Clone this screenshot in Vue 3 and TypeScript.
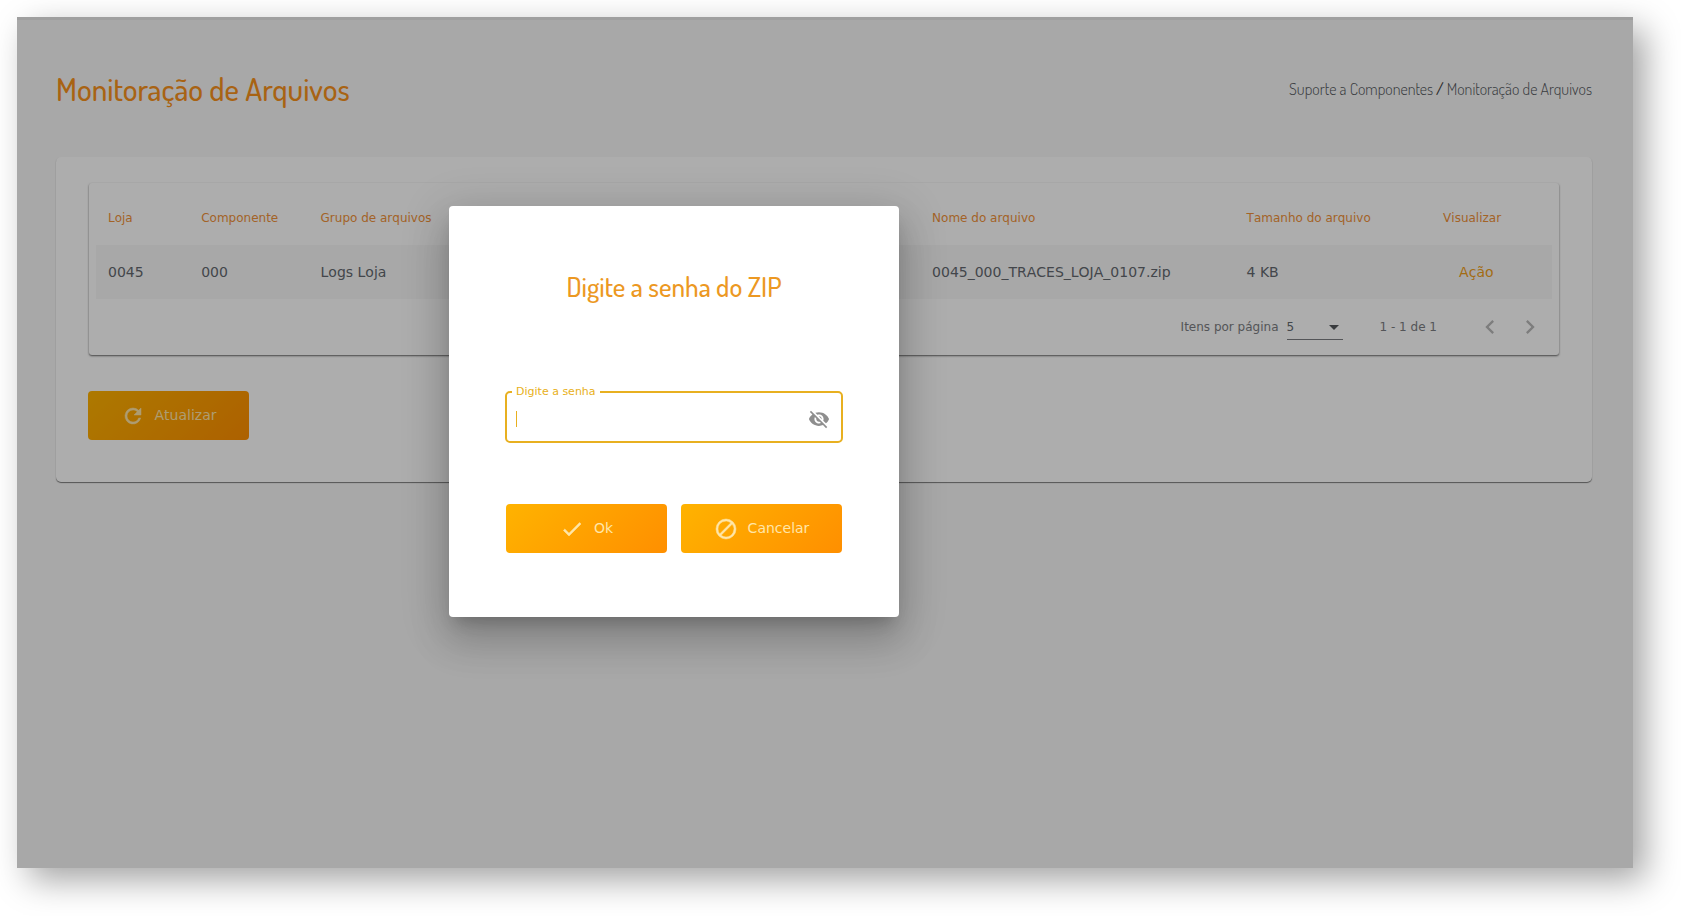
<script setup lang="ts">
import { ref } from 'vue'

interface FileRow {
  store: string
  component: string
  group: string
  name: string
  size: string
}

const columns: string[] = ['Loja', 'Componente', 'Grupo de arquivos', 'Nome do arquivo', 'Tamanho do arquivo', 'Visualizar']
const rows: FileRow[] = [
  { store: '0045', component: '000', group: 'Logs Loja', name: '0045_000_TRACES_LOJA_0107.zip', size: '4 KB' },
]
const pageSize = ref('5')
const password = ref('')
</script>

<template>
  <div class="canvas">
    <div class="frame">
      <main class="page">
        <header class="page-header">
          <h1>Monitoração de Arquivos</h1>
          <nav class="crumbs">
            <a href="#">Suporte a Componentes</a>
            <span class="slash">/</span>
            <a href="#">Monitoração de Arquivos</a>
          </nav>
        </header>

        <section class="card">
          <div class="table-card">
            <table>
              <colgroup>
                <col class="c-store" />
                <col class="c-comp" />
                <col class="c-group" />
                <col class="c-name" />
                <col class="c-size" />
                <col class="c-view" />
              </colgroup>
              <thead>
                <tr>
                  <th v-for="c in columns" :key="c">{{ c }}</th>
                </tr>
              </thead>
              <tbody>
                <tr v-for="r in rows" :key="r.name">
                  <td>{{ r.store }}</td>
                  <td>{{ r.component }}</td>
                  <td>{{ r.group }}</td>
                  <td>{{ r.name }}</td>
                  <td>{{ r.size }}</td>
                  <td><a class="action" href="#">Ação</a></td>
                </tr>
              </tbody>
            </table>
            <div class="paginator">
              <label for="page-size">Itens por página</label>
              <span class="select">
                <select id="page-size" v-model="pageSize">
                  <option>5</option>
                  <option>10</option>
                </select>
                <svg width="10" height="5" viewBox="0 0 10 5"><path d="M0 0h10L5 5z" /></svg>
              </span>
              <span class="range">1 - 1 de 1</span>
              <button class="arrow" type="button" aria-label="Página anterior">
                <svg width="28" height="28" viewBox="0 0 24 24"><path d="M15.41 7.41 14 6l-6 6 6 6 1.41-1.41L10.83 12z" /></svg>
              </button>
              <button class="arrow" type="button" aria-label="Próxima página">
                <svg width="28" height="28" viewBox="0 0 24 24"><path d="M10 6 8.59 7.41 13.17 12l-4.58 4.59L10 18l6-6z" /></svg>
              </button>
            </div>
          </div>
          <button class="btn" type="button">
            <svg width="24" height="24" viewBox="0 0 24 24"><path d="M17.65 6.35A7.96 7.96 0 0 0 12 4a8 8 0 1 0 7.73 10h-2.08A5.99 5.99 0 0 1 12 18a6 6 0 1 1 0-12c1.66 0 3.14.69 4.22 1.78L13 11h7V4z" /></svg>
            <span>Atualizar</span>
          </button>
        </section>
      </main>

      <div class="backdrop"></div>

      <form class="dialog" role="dialog" aria-labelledby="dialog-title" @submit.prevent>
        <h2 id="dialog-title">Digite a senha do ZIP</h2>
        <fieldset class="field">
          <legend><label for="password">Digite a senha</label></legend>
          <div class="field-row">
            <span class="caret"></span>
            <input id="password" v-model="password" type="password" autocomplete="off" />
            <button class="eye" type="button" aria-label="Mostrar senha">
              <svg width="22" height="22" viewBox="0 0 24 24"><path d="M12 7c2.76 0 5 2.24 5 5 0 .65-.13 1.26-.36 1.83l2.92 2.92c1.51-1.26 2.7-2.89 3.43-4.75-1.73-4.39-6-7.5-11-7.5-1.4 0-2.74.25-3.98.7l2.16 2.16C10.74 7.13 11.35 7 12 7zM2 4.27l2.28 2.28.46.46A11.8 11.8 0 0 0 1 12c1.73 4.39 6 7.5 11 7.5 1.55 0 3.03-.3 4.38-.84l.42.42L19.73 22 21 20.73 3.27 3zM7.53 9.8l1.55 1.55c-.05.21-.08.43-.08.65 0 1.66 1.34 3 3 3 .22 0 .44-.03.65-.08l1.55 1.55c-.67.33-1.41.53-2.2.53-2.76 0-5-2.24-5-5 0-.79.2-1.53.53-2.2zm4.31-.78 3.15 3.15.02-.16c0-1.66-1.34-3-3-3z" /></svg>
            </button>
          </div>
        </fieldset>
        <div class="actions">
          <button class="btn" type="submit">
            <svg width="24" height="24" viewBox="0 0 24 24"><path d="M9 16.17 4.83 12l-1.42 1.41L9 19 21 7l-1.41-1.41z" /></svg>
            <span>Ok</span>
          </button>
          <button class="btn" type="button">
            <svg width="24" height="24" viewBox="0 0 24 24"><path d="M12 2a10 10 0 1 0 0 20 10 10 0 0 0 0-20zM4 12a8 8 0 0 1 12.9-6.31L5.69 16.9A7.9 7.9 0 0 1 4 12zm8 8a7.9 7.9 0 0 1-4.9-1.69L18.31 7.1A8 8 0 0 1 12 20z" /></svg>
            <span>Cancelar</span>
          </button>
        </div>
      </form>
    </div>
  </div>
</template>

<style>
body {
  margin: 0;
  background: #fff;
}
</style>

<style scoped>
* {
  box-sizing: border-box;
}
.canvas {
  display: flex;
  min-height: 100vh;
  padding: 17px 48px 48px 17px;
  overflow: hidden;
}
.frame {
  position: relative;
  flex: 1;
  min-width: 0;
  background: #f8f8f8;
  box-shadow: 12px 12px 32px rgba(0, 0, 0, 0.36);
  font-family: Verdana, "DejaVu Sans", sans-serif;
  font-kerning: none;
  color: #63686f;
}
.page {
  padding: 0 41px 40px 39px;
  border-top: 3px solid #ebebeb;
}
.page-header {
  display: flex;
  align-items: center;
  justify-content: space-between;
  padding: 39px 0 38px;
}
h1,
h2,
.crumbs {
  font-family: Dosis, "Liberation Sans Narrow", "Roboto Condensed", Roboto, sans-serif;
  font-kerning: auto;
}
h1 {
  margin: 0;
  font-size: 31px;
  line-height: 60px;
  font-weight: 500;
  color: #f8931c;
}
.crumbs {
  display: flex;
  gap: 3px;
  font-size: 16px;
  line-height: 24px;
  font-weight: 300;
}
.crumbs a {
  color: #55585e;
  text-decoration: none;
}
.slash {
  font-weight: 500;
  color: #3c3e42;
}
.card {
  padding: 26px 33px 42px 32px;
  background: #fff;
  border-radius: 5px;
  box-shadow: 0 1px 1px rgba(0, 0, 0, 0.5);
}
.table-card {
  margin: 0 0 36px 1px;
  padding: 8px 7px 0;
  border-radius: 3px;
  background: #fff;
  box-shadow: 0 1px 2px rgba(0, 0, 0, 0.6);
}
table {
  width: 100%;
  table-layout: fixed;
  border-collapse: collapse;
}
.c-store { width: 6.4%; }
.c-comp { width: 8.2%; }
.c-group { width: 42%; }
.c-name { width: 21.6%; }
.c-size { width: 13.5%; }
th,
td {
  height: 54px;
  padding: 0 12px;
  text-align: left;
  white-space: nowrap;
}
th {
  font-size: 12px;
  font-weight: 400;
  color: #f1923a;
}
td {
  font-size: 14px;
  background: #f8f8f8;
}
.action {
  padding-left: 16px;
  color: #f0a01c;
  text-decoration: none;
}
.paginator {
  display: flex;
  align-items: center;
  justify-content: flex-end;
  height: 56px;
  padding-right: 2px;
  font-size: 12px;
  color: #7c7e82;
}
.select {
  position: relative;
  width: 56px;
  margin: 0 37px 0 8px;
  border-bottom: 1px solid #7c7e82;
}
select {
  display: block;
  width: 100%;
  height: 24px;
  padding: 0;
  border: 0;
  appearance: none;
  background: transparent;
  font: inherit;
  color: #63686f;
}
.select svg {
  position: absolute;
  right: 4px;
  top: 10px;
  fill: #55585c;
  pointer-events: none;
}
.range {
  margin-right: 33px;
}
.arrow {
  display: grid;
  place-items: center;
  width: 40px;
  height: 40px;
  padding: 0;
  border: 0;
  background: transparent;
}
.arrow svg {
  fill: #b8b8b8;
}
.btn {
  display: flex;
  align-items: center;
  justify-content: center;
  gap: 10px;
  width: 161px;
  height: 49px;
  padding: 0;
  border: 0;
  border-radius: 4px;
  background: linear-gradient(135deg, #ffb300, #ff8f00);
  font: 14px Verdana, "DejaVu Sans", sans-serif;
  font-kerning: none;
  color: #ffe6a8;
}
.btn span {
  padding-bottom: 2px;
}
.btn svg {
  fill: currentColor;
  stroke: currentColor;
  stroke-width: 0.5;
}
.backdrop {
  position: absolute;
  inset: 0;
  background: rgba(0, 0, 0, 0.32);
}
.dialog {
  position: absolute;
  top: 189px;
  left: calc(50% - 376px);
  width: 450px;
  padding: 56px 56px 64px;
  border-radius: 4px;
  background: #fff;
  box-shadow: 0 11px 15px -7px rgba(0, 0, 0, 0.2), 0 24px 38px 3px rgba(0, 0, 0, 0.14), 0 9px 46px 8px rgba(0, 0, 0, 0.12);
}
h2 {
  margin: 0 0 75px;
  font-size: 27px;
  line-height: 48px;
  font-weight: 500;
  text-align: center;
  color: #ec9822;
}
.field {
  margin: 0;
  min-width: 0;
  padding: 0 11px 0 9px;
  border: 2px solid #e8b020;
  border-radius: 5px;
}
legend {
  margin-left: -4px;
  padding: 0 4px;
  font-size: 11px;
  line-height: 14px;
  color: #e8b020;
}
.field-row {
  display: flex;
  align-items: center;
  height: 42px;
  padding-bottom: 2px;
}
.caret {
  width: 1px;
  height: 16px;
  background: #e8b020;
}
input {
  flex: 1;
  min-width: 0;
  height: 32px;
  padding: 0;
  border: 0;
  outline: 0;
  background: transparent;
  font: inherit;
}
.eye {
  display: grid;
  padding: 0;
  border: 0;
  background: transparent;
}
.eye svg {
  fill: #8e8e8e;
}
.actions {
  display: flex;
  justify-content: space-between;
  margin: 61px 1px 0;
}
</style>
